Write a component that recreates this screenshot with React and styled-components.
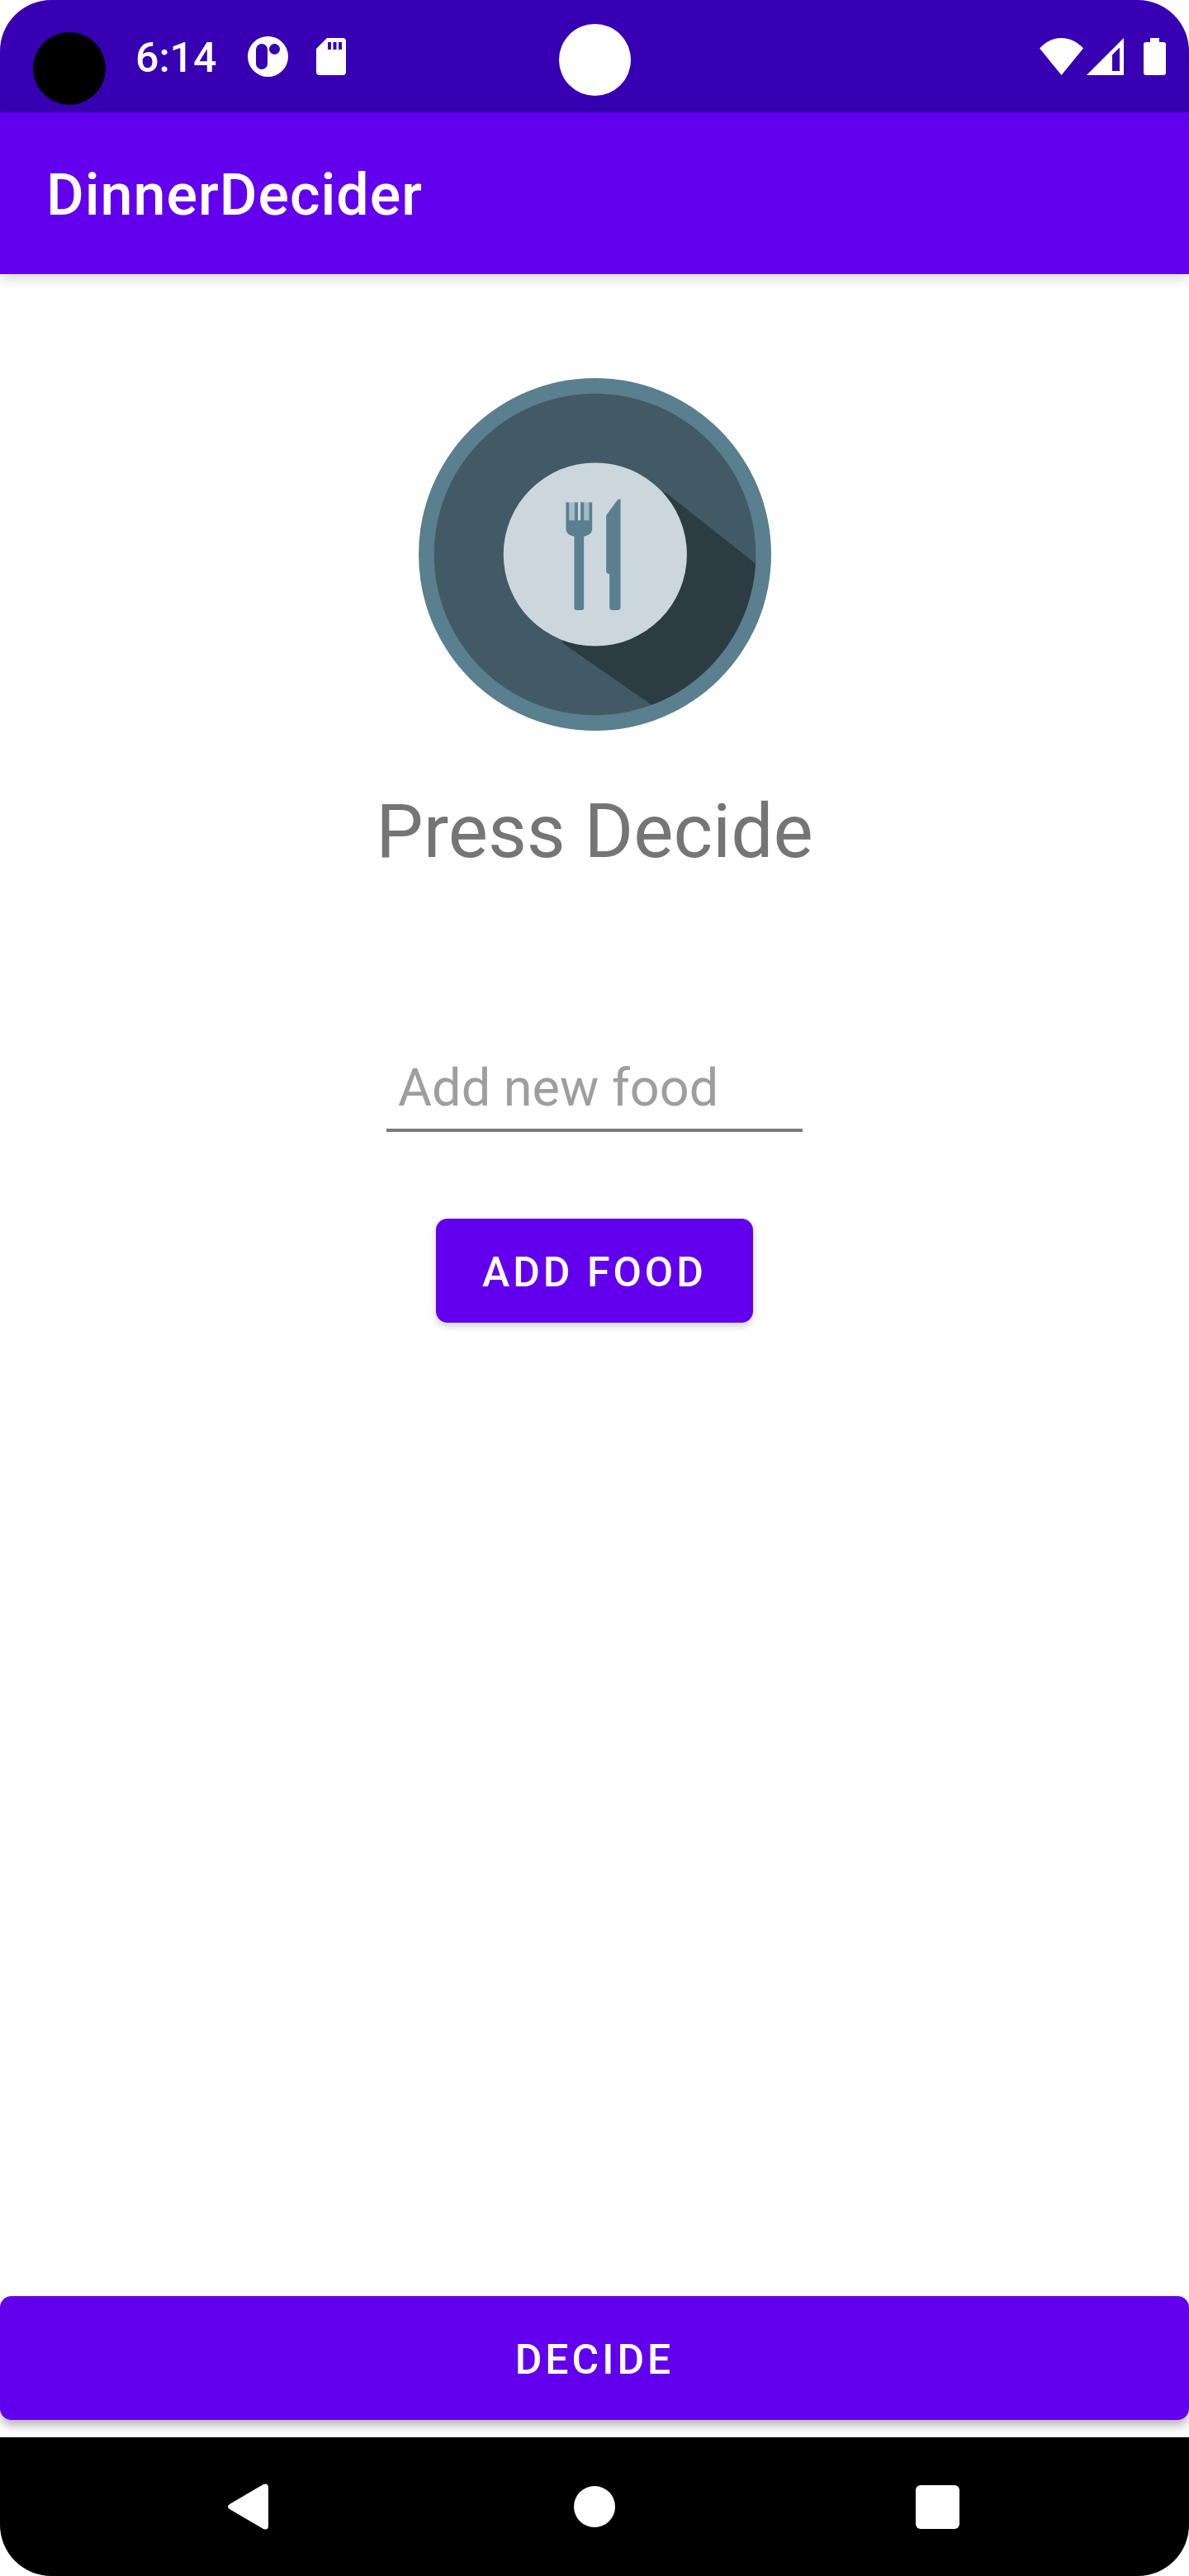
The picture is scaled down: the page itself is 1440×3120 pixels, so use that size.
import React, { useState } from "react";
import styled, { createGlobalStyle } from "styled-components";

const GlobalStyle = createGlobalStyle`
  *, *::before, *::after { box-sizing: border-box; }
  body {
    margin: 0;
    background: #fff;
    font-family: Roboto, "Noto Sans", sans-serif;
  }
`;

const Screen = styled.div`
  position: relative;
  display: flex;
  flex-direction: column;
  min-height: 100vh;
  border-radius: 62px;
  overflow: hidden;
  background: #fff;
`;

const StatusBar = styled.div`
  display: flex;
  align-items: center;
  justify-content: space-between;
  height: 136px;
  padding: 0 28px 0 164px;
  background: #3700b3;
  color: #fff;
`;

const StatusGroup = styled.div`
  display: flex;
  align-items: center;
  gap: ${(p) => p.$gap}px;
`;

const Clock = styled.time`
  padding: 4px 4px 0 0;
  font-size: 50px;
  line-height: 60px;
  font-weight: 500;
`;

const Cutout = styled.span`
  position: absolute;
  border-radius: 50%;
`;

const CornerCutout = styled(Cutout)`
  top: 39px;
  left: 40px;
  width: 88px;
  height: 88px;
  background: #000;
`;

const CameraCutout = styled(Cutout)`
  top: 29px;
  left: calc(50% - 43px);
  width: 87px;
  height: 87px;
  background: #fff;
`;

const Glyph = styled.svg`
  display: block;
  fill: currentColor;
`;

const AppBar = styled.header`
  display: flex;
  align-items: center;
  height: 196px;
  padding: 4px 56px 0;
  background: #6200ee;
  color: #fff;
  box-shadow: 0 4px 16px rgba(0, 0, 0, 0.18);
`;

const Title = styled.h1`
  margin: 0;
  font-size: 70px;
  line-height: 82px;
  font-weight: 500;
  letter-spacing: 1px;
`;

const Main = styled.main`
  flex: 1;
  display: flex;
  flex-direction: column;
  align-items: center;
  padding: 126px 0 21px;
`;

const Logo = styled.svg`
  display: block;
  width: 427px;
  height: 427px;
`;

const Result = styled.p`
  margin: 68px 0 0;
  font-size: 91px;
  line-height: 108px;
  color: #757575;
`;

const FoodForm = styled.form`
  display: flex;
  flex-direction: column;
  align-items: center;
  gap: 105px;
  margin-top: 219px;
`;

const FoodInput = styled.input`
  width: 504px;
  padding: 0 14px 12px;
  border: 0;
  border-bottom: 4px solid #7b7b7b;
  border-radius: 0;
  outline: 0;
  background: transparent;
  color: #212121;
  font: 400 63px/75px Roboto, "Noto Sans", sans-serif;
  &::placeholder { color: #9e9e9e; opacity: 1; }
`;

const Button = styled.button`
  height: ${(p) => (p.$wide ? 150 : 126)}px;
  width: ${(p) => (p.$wide ? "100%" : "auto")};
  margin-top: ${(p) => (p.$wide ? "auto" : 0)};
  padding: 4px 56px 0;
  border: 0;
  border-radius: 14px;
  background: #6200ee;
  color: #fff;
  font: 500 50px/60px Roboto, "Noto Sans", sans-serif;
  letter-spacing: 4px;
  text-transform: uppercase;
  cursor: pointer;
  box-shadow: ${(p) =>
    p.$wide ? "0 7px 12px rgba(0, 0, 0, 0.28)" : "0 4px 8px rgba(0, 0, 0, 0.2)"};
`;

const NavBar = styled.nav`
  display: flex;
  justify-content: center;
  align-items: center;
  gap: 249px;
  height: 168px;
  background: #000;
`;

const NavButton = styled.button`
  display: flex;
  padding: 42px;
  border: 0;
  background: none;
  color: #fff;
  cursor: pointer;
`;

function NotificationIcon() {
  return (
    <Glyph width="49" height="49" viewBox="0 0 49 49">
      <path
        fillRule="evenodd"
        d="M24.500 0a24.500 24.500 0 1 1 0 49a24.500 24.500 0 0 1 0-49Z
           M17 9a7 7 0 0 0-7 7v17a7 7 0 0 0 14 0V16a7 7 0 0 0-7-7Z
           M32.500 9a6.500 6.500 0 1 0 0 13a6.500 6.500 0 0 0 0-13Z"
      />
    </Glyph>
  );
}

function SdCardIcon() {
  return (
    <Glyph width="36" height="45" viewBox="0 0 36 45">
      <path
        fillRule="evenodd"
        d="M13 0H32a4 4 0 0 1 4 4V41a4 4 0 0 1-4 4H4a4 4 0 0 1-4-4V13Z
           M14 5v9h4V5Z M20.500 5v9h4V5Z M27 5v9h4V5Z"
      />
    </Glyph>
  );
}

function WifiIcon() {
  return (
    <Glyph width="53" height="45" viewBox="0 0 53 45">
      <path d="M0 12.500C7 5 16 0 26.500 0S46 5 53 12.500L26.500 45Z" />
    </Glyph>
  );
}

function SignalIcon() {
  return (
    <Glyph width="45" height="45" viewBox="0 0 45 45">
      <path fillRule="evenodd" d="M45 0V45H0Z M40 11.500L31 20.500V40H40Z" />
    </Glyph>
  );
}

function BatteryIcon() {
  return (
    <Glyph width="27" height="45" viewBox="0 0 27 45">
      <path d="M8 0H19V5H24a3 3 0 0 1 3 3V42a3 3 0 0 1-3 3H3a3 3 0 0 1-3-3V8a3 3 0 0 1 3-3H8Z" />
    </Glyph>
  );
}

function DinnerLogo() {
  return (
    <Logo viewBox="0 0 1280 1280" role="img" aria-label="Fork and knife on a plate">
      <defs>
        <clipPath id="tray">
          <circle cx="640" cy="640" r="584" />
        </clipPath>
      </defs>
      <circle cx="640" cy="640" r="640" fill="#5a7f8f" />
      <circle cx="640" cy="640" r="584" fill="#425a65" />
      <path d="M895 414L1225 675L1280 1280H960L848 1188L520 960Z" fill="#2b3c43" clipPath="url(#tray)" />
      <circle cx="641" cy="640" r="333" fill="#ccd7dd" />
      <path d="M537 451H629V516H537Z" fill="#a5bac4" />
      <path d="M578 451H588V516H578Z" fill="#ccd7dd" />
      <path
        d="M535 451H546V516H567V451H578V516H588V451H600V516H619V451H630V548
           C630 562 617 572 600 575V834Q600 842 592 842H573Q565 842 565 834V575
           C548 572 535 562 535 548Z"
        fill="#5a7f8f"
      />
      <path
        d="M733 440V832Q733 842 723 842H703Q693 842 693 832V711Q681 711 681 699V498L721 444Q726 438 733 440Z"
        fill="#5a7f8f"
      />
    </Logo>
  );
}

const STARTING_FOODS = ["Pizza", "Tacos", "Sushi", "Pasta"];

export default function App() {
  const [foods, setFoods] = useState(STARTING_FOODS);
  const [draft, setDraft] = useState("");
  const [result, setResult] = useState("Press Decide");

  const addFood = (event) => {
    event.preventDefault();
    if (draft.trim()) {
      setFoods([...foods, draft.trim()]);
      setDraft("");
    }
  };

  const decide = () => setResult(foods[Math.floor(Math.random() * foods.length)]);

  return (
    <>
      <GlobalStyle />
      <Screen>
        <StatusBar>
          <StatusGroup $gap={34}>
            <Clock>6:14</Clock>
            <NotificationIcon />
            <SdCardIcon />
          </StatusGroup>
          <StatusGroup $gap={24}>
            <StatusGroup $gap={4}>
              <WifiIcon />
              <SignalIcon />
            </StatusGroup>
            <BatteryIcon />
          </StatusGroup>
        </StatusBar>
        <CornerCutout />
        <CameraCutout />
        <AppBar>
          <Title>DinnerDecider</Title>
        </AppBar>
        <Main>
          <DinnerLogo />
          <Result>{result}</Result>
          <FoodForm onSubmit={addFood}>
            <FoodInput
              type="text"
              aria-label="Add new food"
              placeholder="Add new food"
              value={draft}
              onChange={(event) => setDraft(event.target.value)}
            />
            <Button type="submit">Add food</Button>
          </FoodForm>
          <Button type="button" $wide onClick={decide}>
            Decide
          </Button>
        </Main>
        <NavBar>
          <NavButton type="button" aria-label="Back">
            <Glyph width="84" height="84" viewBox="0 0 84 84">
              <path d="M17 39L58 15Q64 13 64 19V65Q64 71 58 69L17 45Q13 42 17 39Z" />
            </Glyph>
          </NavButton>
          <NavButton type="button" aria-label="Home">
            <Glyph width="84" height="84" viewBox="0 0 84 84">
              <circle cx="42" cy="42" r="25" />
            </Glyph>
          </NavButton>
          <NavButton type="button" aria-label="Recent apps">
            <Glyph width="84" height="84" viewBox="0 0 84 84">
              <rect x="14" y="16" width="53" height="53" rx="6" />
            </Glyph>
          </NavButton>
        </NavBar>
      </Screen>
    </>
  );
}
